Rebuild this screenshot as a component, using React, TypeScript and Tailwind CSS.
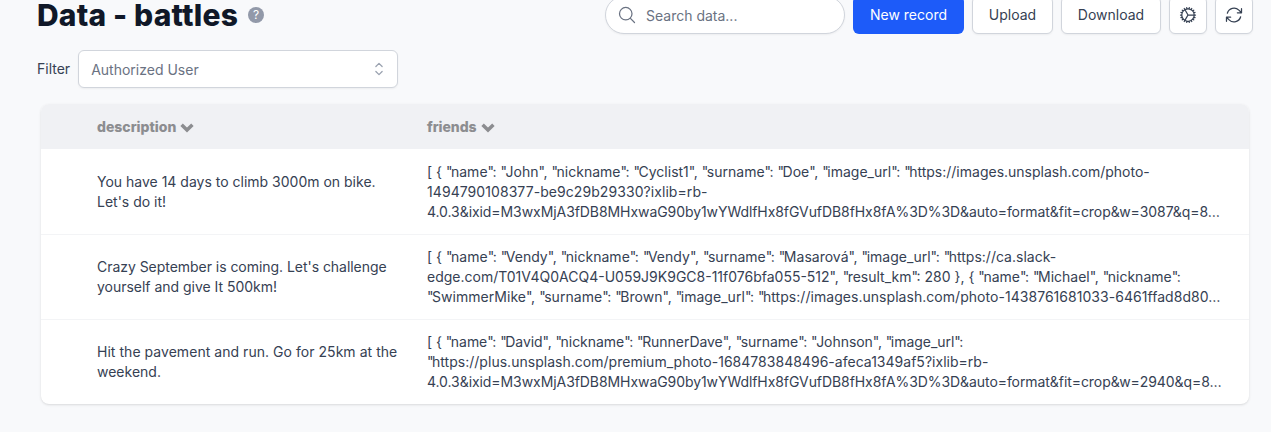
import React from 'react';
import {
  HiOutlineArrowPath,
  HiOutlineChevronUpDown,
  HiOutlineCog,
  HiOutlineMagnifyingGlass,
} from 'react-icons/hi2';

type Line = { text: string; tracking?: string };

const rows: { description: Line[]; friends: Line[] }[] = [
  {
    description: [{ text: 'You have 14 days to climb 3000m on bike.' }, { text: "Let's do it!" }],
    friends: [
      { text: '[ { "name": "John", "nickname": "Cyclist1", "surname": "Doe", "image_url": "https://images.unsplash.com/photo-' },
      { text: '1494790108377-be9c29b29330?ixlib=rb-', tracking: 'tracking-[0.07px]' },
      { text: '4.0.3&ixid=M3wxMjA3fDB8MHxwaG90by1wYWdlfHx8fGVufDB8fHx8fA%3D%3D&auto=format&fit=crop&w=3087&q=8…', tracking: 'tracking-[-0.07px]' },
    ],
  },
  {
    description: [
      { text: "Crazy September is coming. Let's challenge", tracking: 'tracking-[-0.04px]' },
      { text: 'yourself and give It 500km!', tracking: 'tracking-[-0.02px]' },
    ],
    friends: [
      { text: '[ { "name": "Vendy", "nickname": "Vendy", "surname": "Masarová", "image_url": "https://ca.slack-', tracking: 'tracking-[0.015px]' },
      { text: 'edge.com/T01V4Q0ACQ4-U059J9K9GC8-11f076bfa055-512", "result_km": 280 }, { "name": "Michael", "nickname":' },
      { text: '"SwimmerMike", "surname": "Brown", "image_url": "https://images.unsplash.com/photo-1438761681033-6461ffad8d80…', tracking: 'tracking-[0.04px]' },
    ],
  },
  {
    description: [
      { text: 'Hit the pavement and run. Go for 25km at the', tracking: 'tracking-[0.04px]' },
      { text: 'weekend.' },
    ],
    friends: [
      { text: '[ { "name": "David", "nickname": "RunnerDave", "surname": "Johnson", "image_url":', tracking: 'tracking-[-0.04px]' },
      { text: '"https://plus.unsplash.com/premium_photo-1684783848496-afeca1349af5?ixlib=rb-', tracking: 'tracking-[0.02px]' },
      { text: '4.0.3&ixid=M3wxMjA3fDB8MHxwaG90by1wYWdlfHx8fGVufDB8fHx8fA%3D%3D&auto=format&fit=crop&w=2940&q=8…', tracking: 'tracking-[-0.07px]' },
    ],
  },
];

const button =
  'flex h-[38px] items-center justify-center rounded-md border border-gray-300 bg-white text-sm text-gray-700 shadow-xs';

function Lines({ lines }: { lines: Line[] }) {
  return (
    <div className="whitespace-nowrap">
      {lines.map(({ text, tracking }) => (
        <div key={text} className={tracking}>
          {text.split(/(")/).map((part, i) =>
            part === '"' ? <span key={i} className="tracking-[-1.5px]">{part}</span> : part,
          )}
        </div>
      ))}
    </div>
  );
}

function Chevron() {
  return (
    <svg viewBox="0 0 14 10" className="mt-0.5 ml-1 h-[10px] w-[14px]" fill="none" stroke="currentColor" strokeWidth="3.5">
      <path d="M1.6 1.8 7 7.1l5.4-5.3" strokeLinejoin="miter" />
    </svg>
  );
}

export default function App() {
  return (
    <div className="h-[432px] overflow-hidden bg-[#f8f9fb] font-['Inter',sans-serif] text-sm text-gray-700 antialiased">
      <header className="-mt-1 flex h-[38px] items-center pr-[18px] pl-[37px]">
        <h1 className="w-[201px] text-[30px] leading-9 font-extrabold tracking-[0.18px] whitespace-nowrap text-gray-900">Data - battles</h1>
        <span className="ml-2.5 flex size-4 items-center justify-center rounded-full bg-[#9299a9] text-[12px] leading-4 text-white">?</span>
        <div className="ml-auto flex gap-2">
          <div className="flex h-[38px] w-60 items-center rounded-full border border-gray-300 bg-white pl-[11px] text-gray-500 shadow-xs">
            <HiOutlineMagnifyingGlass className="mr-[9px] size-5 text-gray-500" />
            <span className="pt-0.5">Search data...</span>
          </div>
          <button className="h-[38px] w-[111px] rounded-md bg-[#1d5bf9] text-white">New record</button>
          <button className={`${button} w-[81px]`}>Upload</button>
          <button className={`${button} w-[100px]`}>Download</button>
          <button className={`${button} w-[38px]`}><HiOutlineCog className="size-5" /></button>
          <button className={`${button} w-[38px]`}><HiOutlineArrowPath className="size-5" /></button>
        </div>
      </header>
      <div className="mt-4 flex items-center gap-2 pl-[37px]">
        <span>Filter</span>
        <div className="flex h-[38px] w-80 items-center justify-between rounded-md border border-gray-300 bg-white pr-2 pl-3 text-gray-500 shadow-xs">
          <span className="pt-0.5">Authorized User</span>
          <HiOutlineChevronUpDown className="size-5 text-gray-400" />
        </div>
      </div>
      <section className="mt-4 ml-[41px] w-[1208px] overflow-hidden rounded-lg bg-white shadow-sm">
        <div className="flex h-[45px] items-center bg-[#f0f1f4] pl-14 font-extrabold text-[#8c8d90]">
          <div className="flex w-[330px] items-center"><span className="tracking-[-0.01px]">description</span><Chevron /></div>
          <div className="flex items-center"><span className="tracking-[-0.05px]">friends</span><Chevron /></div>
        </div>
        <div>
          {rows.map((row, i) => (
            <div key={i} className="flex h-[85px] items-center border-t border-gray-100 pl-14 first:border-transparent">
              <div className="w-[330px]"><Lines lines={row.description} /></div>
              <Lines lines={row.friends} />
            </div>
          ))}
        </div>
      </section>
    </div>
  );
}
